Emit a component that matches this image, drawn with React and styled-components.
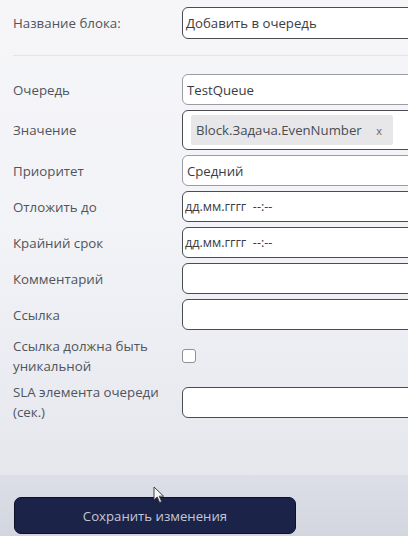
import React from "react";
import styled, { createGlobalStyle } from "styled-components";

const Global = createGlobalStyle`
  html, body { margin: 0; padding: 0; }
  body {
    width: 408px; height: 536px; overflow: hidden;
    font-family: "Open Sans", "Noto Sans", sans-serif;
    background: #f4f5f8;
  }
`;

const Page = styled.div`
  position: relative;
  width: 408px;
  height: 536px;
  display: flex;
  flex-direction: column;
  overflow: hidden;
`;

const Panel = styled.div`
  flex: 0 0 475px;
  box-sizing: border-box;
  padding: 7px 0 0 13px;
  background: linear-gradient(#f6f6f9 0%, #f2f3f7 50%, #e5e7ed 100%);
`;

const Row = styled.div`
  display: grid;
  grid-template-columns: 169px 240px;
  align-items: center;
  min-height: ${(p) => p.$h || 31}px;
  margin-bottom: ${(p) => (p.$gap ?? 5)}px;
`;

const Label = styled.div`
  font-size: 13.3px;
  line-height: 20px;
  color: #50545b;
  white-space: nowrap;
`;

const Field = styled.div`
  box-sizing: border-box;
  height: ${(p) => p.$h || 31}px;
  border: 1px solid ${(p) => (p.$light ? "#9a9ca2" : "#4a4c52")};
  border-radius: 6px;
  background: #ffffff;
  display: flex;
  align-items: center;
  padding-left: ${(p) => p.$pl ?? 4}px;
  font-size: ${(p) => p.$fs || 13.2}px;
  color: #3a3c42;
  white-space: pre;
`;

const Chip = styled.div`
  display: flex;
  align-items: center;
  height: 30px;
  margin-left: 4px;
  padding: 0 11px 0 5px;
  background: #e7e7e9;
  border-radius: 2px;
  font-size: 13.2px;
  color: #4a4c52;
  gap: 11px;
`;

const ChipX = styled.span`
  font-size: 11px;
  color: #666;
`;

const Divider = styled.div`
  height: 1px;
  background: #e3e4ea;
  margin: 16px 0 18px;
`;

const Checkbox = styled.div`
  width: 12px;
  height: 12px;
  border: 1px solid #8e9096;
  border-radius: 3px;
  background: #fff;
`;

const Footer = styled.div`
  flex: 1;
  background: linear-gradient(#dcdfe7, #d3d6df);
  padding: 22px 0 0 14px;
`;

const SaveButton = styled.button`
  width: 282px;
  height: 37px;
  border-radius: 7px;
  border: 1.5px solid #0c1128;
  background: #1b2348;
  color: #c3c7d6;
  font-family: "Open Sans", "Noto Sans", sans-serif;
  font-size: 13.2px;
  padding: 0;
`;

const Cursor = styled.svg`
  position: absolute;
  left: 153px;
  top: 486px;
`;

export default function App() {
  return (
    <Page>
      <Global />
      <Panel>
        <Row $h={32} $gap={0}>
          <Label>Название блока:</Label>
          <Field $h={32} $pl={3}>Добавить в очередь</Field>
        </Row>
        <Divider />
        <Row>
          <Label>Очередь</Label>
          <Field $light>TestQueue</Field>
        </Row>
        <Row $h={40}>
          <Label>Значение</Label>
          <Field $h={40} $pl={4}>
            <Chip>
              Block.Задача.EvenNumber <ChipX>x</ChipX>
            </Chip>
          </Field>
        </Row>
        <Row>
          <Label>Приоритет</Label>
          <Field $light>Средний</Field>
        </Row>
        <Row>
          <Label>Отложить до</Label>
          <Field $pl={2} $fs={12.6}>дд.мм.гггг  --:--</Field>
        </Row>
        <Row>
          <Label>Крайний срок</Label>
          <Field $pl={2} $fs={12.6}>дд.мм.гггг  --:--</Field>
        </Row>
        <Row>
          <Label>Комментарий</Label>
          <Field />
        </Row>
        <Row $gap={6}>
          <Label>Ссылка</Label>
          <Field />
        </Row>
        <Row $h={40} $gap={6}>
          <Label>Ссылка должна быть<br />уникальной</Label>
          <Checkbox />
        </Row>
        <Row $h={40}>
          <Label>SLA элемента очереди<br />(сек.)</Label>
          <Field />
        </Row>
      </Panel>
      <Footer>
        <SaveButton>Сохранить изменения</SaveButton>
      </Footer>
      <Cursor width="12" height="18" viewBox="0 0 12 18">
        <path d="M1 1 L1 14 L4.2 11 L6.6 16.5 L8.6 15.6 L6.3 10.2 L10.6 10.2 Z" fill="#f5f5f5" stroke="#333" strokeWidth="0.9" strokeLinejoin="round" />
      </Cursor>
    </Page>
  );
}
